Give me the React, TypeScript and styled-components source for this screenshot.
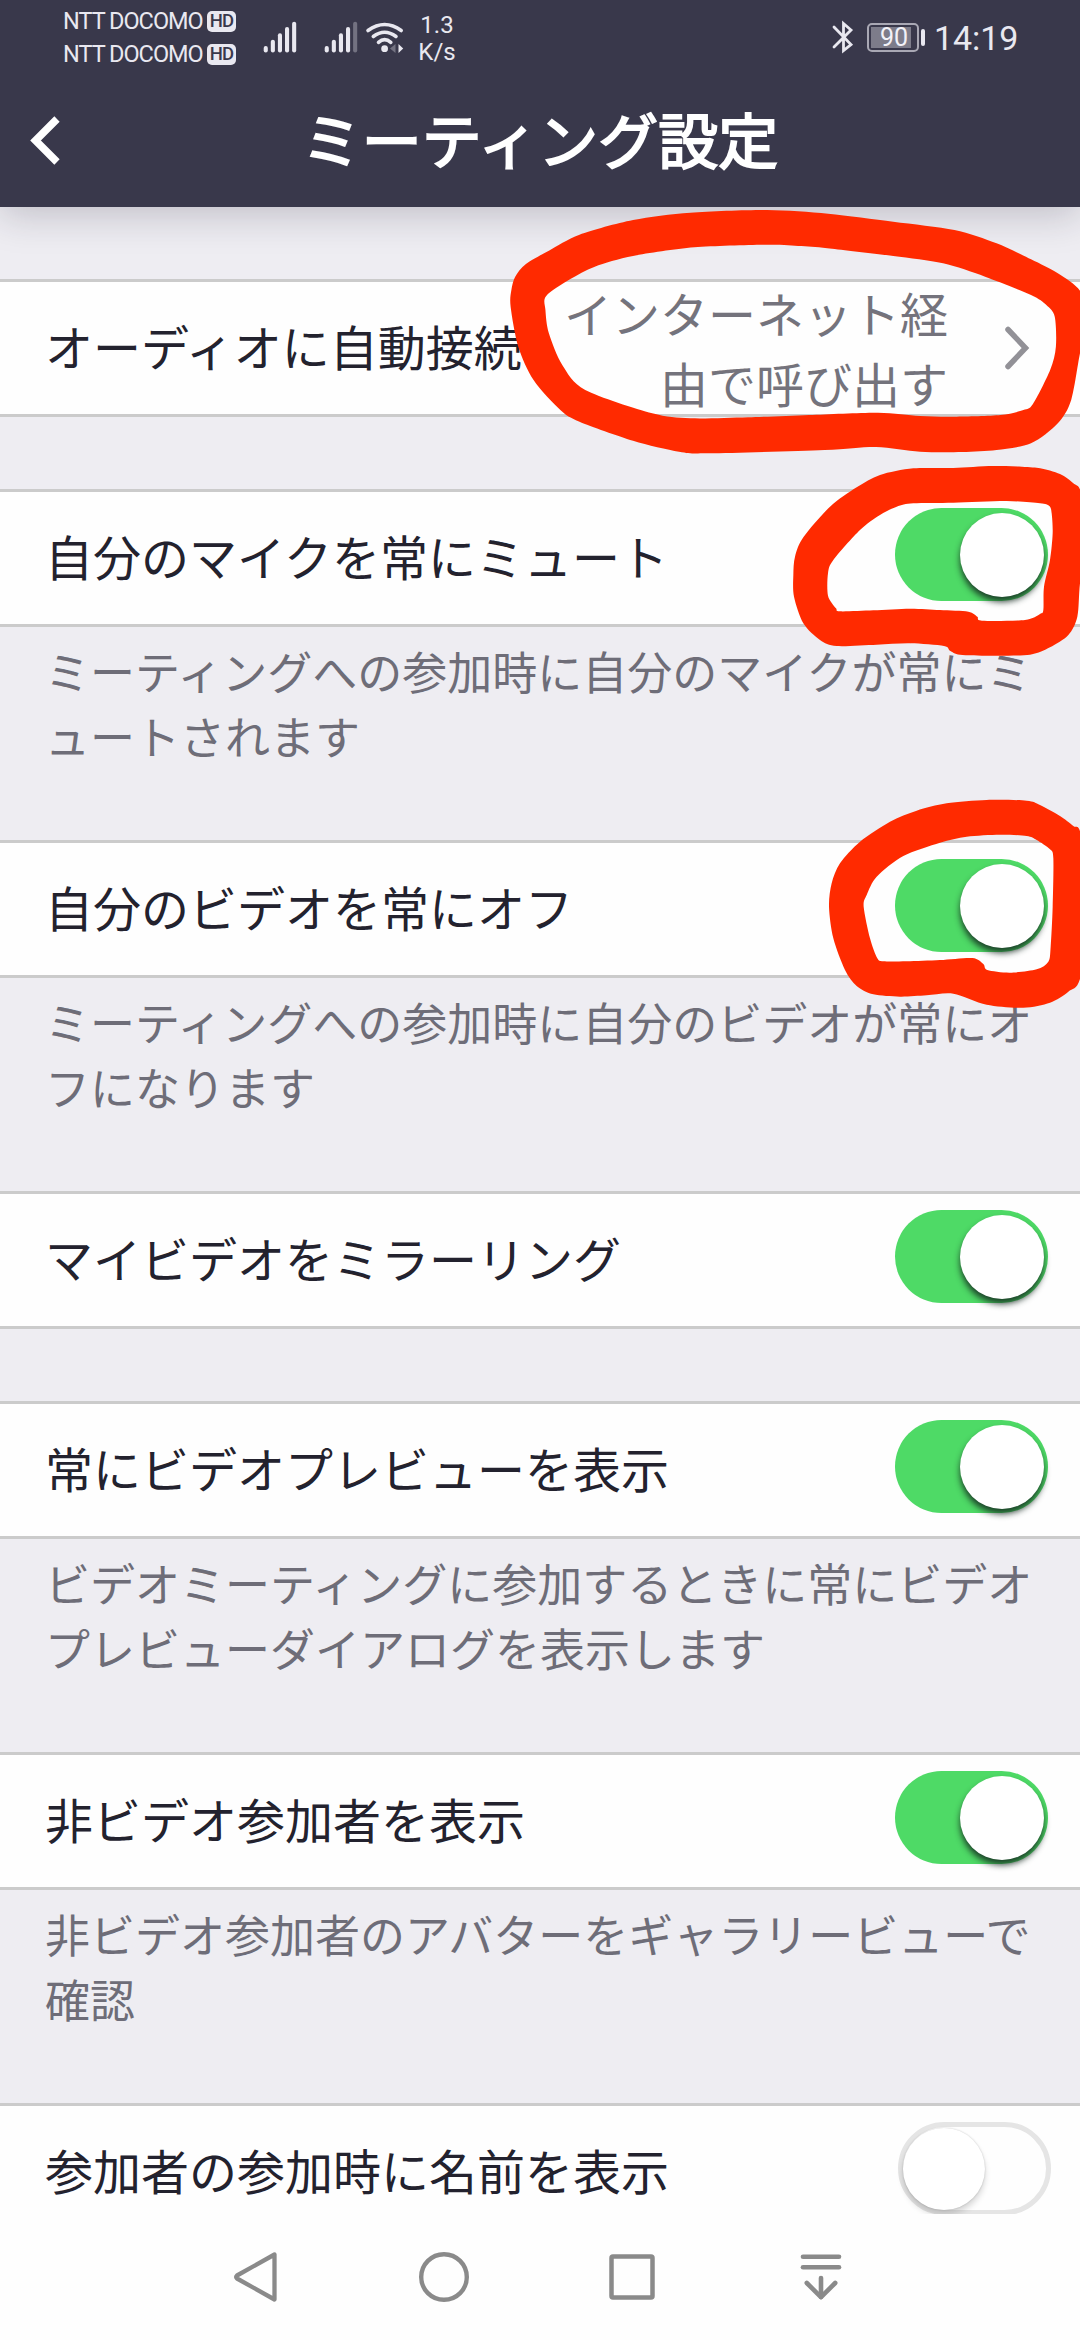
import React from "react";
import styled, { createGlobalStyle, css } from "styled-components";

const GlobalStyle = createGlobalStyle`
  * { box-sizing: border-box; }
  body { margin: 0; background: #eeedf2; }
`;

const jp = `"Noto Sans CJK JP", "Noto Sans", sans-serif`;
const latin = `Roboto, "Liberation Sans", sans-serif`;

const Screen = styled.div`
  position: relative;
  width: 1080px;
  height: 2340px;
  display: flex;
  flex-direction: column;
  overflow: hidden;
  background: #eeedf2;
  font-family: ${jp};
`;

const Header = styled.header`
  position: relative;
  flex: none;
  height: 207px;
  background: #39384b;
  box-shadow: 0 8px 36px rgba(30, 28, 50, 0.22);
`;

const StatusBar = styled.div`
  display: flex;
  align-items: flex-start;
  height: 72px;
  padding: 0 63px;
  color: #e9e8f0;
  font-family: ${latin};
`;

const Carriers = styled.div`
  display: flex;
  flex-direction: column;
  flex: none;
  gap: 9px;
  width: 197px;
  padding-top: 9px;
`;

const Carrier = styled.div`
  display: flex;
  align-items: center;
  height: 24px;
  gap: 6px;
`;

const CarrierName = styled.span`
  flex: none;
  width: 138px;
  font-size: 23.5px;
  line-height: 24px;
  letter-spacing: -1px;
  white-space: nowrap;
`;

const HdBadge = styled.span`
  display: flex;
  flex: none;
  align-items: center;
  justify-content: center;
  width: 29px;
  height: 21px;
  border-radius: 5px;
  background: #e9e8f0;
  color: #39384b;
  font-size: 18.5px;
  font-weight: 500;
  line-height: 21px;
  letter-spacing: -0.8px;
`;

const Glyph = styled.svg`
  display: block;
  flex: none;
  overflow: visible;
`;

const Speed = styled.div`
  display: flex;
  flex-direction: column;
  flex: none;
  align-items: center;
  width: 36px;
  margin-left: 11px;
  padding-top: 12px;
  font-size: 24px;
  line-height: 27px;
`;

const StatusRight = styled.div`
  display: flex;
  align-items: flex-start;
  margin-left: auto;
`;

const Battery = styled.div`
  display: flex;
  align-items: center;
  gap: 2px;
  margin: 23px 0 0 14px;
`;

const BatteryBody = styled.div`
  display: flex;
  width: 52px;
  height: 29px;
  padding: 2px;
  border: 2px solid #a9a8b4;
  border-radius: 5px;
`;

const BatteryLevel = styled.div`
  display: flex;
  align-items: center;
  justify-content: flex-end;
  width: 40px;
  height: 21px;
  padding-right: 3px;
  background: #7d7c8a;
  color: #f2f1f7;
  font-size: 25px;
  line-height: 21px;
`;

const BatteryNub = styled.div`
  width: 4px;
  height: 17px;
  border-radius: 2px;
  background: #e9e8f0;
`;

const Clock = styled.span`
  width: 83px;
  margin: 18px 0 0 9px;
  font-size: 34px;
  line-height: 40px;
  letter-spacing: -0.1px;
  white-space: nowrap;
`;

const TitleBar = styled.div`
  display: grid;
  grid-template-columns: 90px 1fr 90px;
  align-items: center;
  height: 135px;
`;

const BackButton = styled.button`
  display: flex;
  align-items: center;
  height: 135px;
  padding: 0 0 0 30px;
  border: 0;
  background: none;
`;

const Title = styled.h1`
  margin: 0;
  padding-bottom: 5px;
  color: #fff;
  font-size: 60px;
  font-weight: 400;
  line-height: 87px;
  text-align: center;
  -webkit-text-stroke: 2px #fff;
`;

const List = styled.main`
  flex: 1;
  min-height: 0;
  padding-top: 72px;
  overflow: hidden;
`;

const Section = styled.section`
  display: flex;
  flex-direction: column;
`;

const Row = styled.div`
  display: flex;
  align-items: center;
  justify-content: space-between;
  height: 138px;
  padding: 0 32px 0 45px;
  border: solid #cbcbcb;
  border-width: 3px 0;
  background: #fefefe;
`;

const Label = styled.span`
  padding-bottom: 6px;
  color: #23222e;
  font-size: 48px;
  line-height: 70px;
  white-space: nowrap;
`;

const Value = styled.div`
  display: flex;
  align-items: center;
  gap: 57px;
  padding-right: 19px;
`;

const ValueText = styled.span`
  padding-bottom: 1px;
  color: #74737c;
  font-size: 48px;
  line-height: 69.5px;
  text-align: right;
  white-space: nowrap;
`;

const Note = styled.p`
  height: 213px;
  margin: 0;
  padding: 11px 0 0 45px;
  color: #6e6d78;
  font-size: 45px;
  line-height: 65px;
  white-space: nowrap;
`;

const Gap = styled.div`
  height: 72px;
`;

const Track = styled.div<{ $on: boolean }>`
  display: flex;
  align-items: center;
  width: 153px;
  height: 93px;
  margin-bottom: 7px;
  border-radius: 47px;
  ${({ $on }) =>
    $on
      ? css`
          justify-content: flex-end;
          padding-right: 4px;
          background: #4eda66;
        `
      : css`
          justify-content: flex-start;
          margin-right: -3px;
          border: 5px solid #e5e5e5;
          background: #fefefe;
        `}
`;

const Knob = styled.div<{ $on: boolean }>`
  width: ${({ $on }) => ($on ? 84 : 82)}px;
  height: ${({ $on }) => ($on ? 84 : 82)}px;
  border-radius: 50%;
  background: #fff;
  box-shadow: ${({ $on }) =>
    $on
      ? "0 5px 6px rgba(20, 40, 30, 0.85)"
      : "0 5px 6px rgba(0, 0, 0, 0.16), 0 0 2px rgba(0, 0, 0, 0.2)"};
`;

const NavBar = styled.nav`
  position: relative;
  display: flex;
  flex: none;
  height: 126px;
  padding-left: 161px;
  background: #fefefe;
`;

const NavButton = styled.button`
  display: flex;
  align-items: center;
  justify-content: center;
  width: 188.5px;
  height: 126px;
  padding: 0;
  border: 0;
  background: none;
`;

const Mark = styled.svg<{ $x: number; $y: number; $w: number; $h: number }>`
  position: absolute;
  left: ${({ $x }) => $x}px;
  top: ${({ $y }) => $y}px;
  width: ${({ $w }) => $w}px;
  height: ${({ $h }) => $h}px;
  overflow: hidden;
  pointer-events: none;
`;

type Pt = [number, number];

/* Closed smooth curve through the points (Catmull-Rom converted to Béziers). */
function loop(pts: Pt[]): string {
  const n = pts.length;
  let d = `M${pts[0][0]} ${pts[0][1]}`;
  for (let i = 0; i < n; i++) {
    const a = pts[(i - 1 + n) % n];
    const b = pts[i];
    const c = pts[(i + 1) % n];
    const e = pts[(i + 2) % n];
    d += `C${b[0] + (c[0] - a[0]) / 7} ${b[1] + (c[1] - a[1]) / 7} ${c[0] - (e[0] - b[0]) / 7} ${
      c[1] - (e[1] - b[1]) / 7
    } ${c[0]} ${c[1]}`;
  }
  return d + "Z";
}

const marks: { x: number; y: number; w: number; h: number; box: string; outer: Pt[]; inner: Pt[] }[] = [
  {
    x: 480, y: 200, w: 600, h: 260, box: "0 0 1568 780",
    outer: [[80,320],[82,270],[92,230],[120,192],[180,152],[260,104],[400,60],[550,38],[750,30],[910,41],[1080,65],[1240,90],[1350,130],[1440,178],[1510,220],[1568,272],[1590,350],[1568,460],[1545,600],[1510,670],[1440,730],[1350,750],[1260,756],[1150,755],[1035,741],[900,750],[600,760],[520,755],[400,722],[260,665],[210,630],[140,540],[100,440]],
    inner: [[171,330],[173,288],[235,238],[300,200],[400,168],[560,142],[750,134],[840,138],[920,146],[1080,168],[1210,190],[1320,230],[1440,285],[1480,315],[1502,350],[1505,440],[1490,510],[1445,612],[1420,630],[1360,645],[1240,650],[1150,648],[1040,638],[860,645],[700,652],[550,655],[450,640],[275,570],[215,495],[180,400]],
  },
  {
    x: 740, y: 450, w: 340, h: 280, box: "0 0 1020 840",
    outer: [[160,375],[165,320],[190,262],[270,170],[350,112],[420,75],[520,55],[640,54],[760,48],[890,53],[960,72],[1000,100],[1022,125],[1040,250],[1020,400],[1012,500],[985,555],[930,592],[870,614],[750,617],[660,614],[630,602],[612,588],[510,580],[410,584],[290,588],[240,570],[190,520],[162,440]],
    inner: [[264,437],[264,370],[280,330],[360,240],[420,195],[470,170],[520,160],[640,158],[800,153],[900,160],[928,168],[935,190],[938,250],[930,330],[912,410],[910,480],[900,492],[855,510],[726,512],[712,500],[685,485],[600,480],[510,476],[400,481],[300,484],[288,475]],
  },
  {
    x: 740, y: 780, w: 340, h: 280, box: "0 0 1020 840",
    outer: [[267,380],[275,310],[300,250],[360,185],[450,125],[530,92],[620,70],[740,60],[860,62],[900,75],[960,108],[1000,138],[1022,160],[1060,350],[1022,590],[985,635],[930,668],[850,683],[740,674],[640,641],[560,646],[480,650],[400,643],[350,618],[315,570],[280,475]],
    inner: [[371,380],[380,345],[410,290],[490,228],[600,188],[680,170],[780,164],[860,168],[890,180],[930,208],[940,235],[938,380],[932,500],[925,545],[890,568],[810,578],[742,570],[730,552],[697,534],[600,540],[500,544],[430,544],[412,535],[390,475]],
  },
];

const barTops = [46, 39.7, 33.3, 27, 21.7];

function Signal({ weak }: { weak?: boolean }) {
  return (
    <Glyph width="36" height="72" viewBox="0 0 36 72">
      {barTops.map((top, i) => (
        <rect
          key={top}
          x={3.7 + i * 7.1}
          y={top}
          width="4.1"
          height={52.5 - top}
          rx="2"
          fill={weak && i === 4 ? "#737281" : "#e9e8f0"}
        />
      ))}
    </Glyph>
  );
}

const Spacer = styled.div`
  flex: none;
  width: 25px;
`;

function Wifi() {
  return (
    <Glyph width="51" height="72" viewBox="357 0 51 72">
      <g fill="none" stroke="#e9e8f0" strokeWidth="3.6" strokeLinecap="round">
        <path d="M368 30.5Q384.6 18.5 401.2 30.5" />
        <path d="M373.3 36.5Q384.6 28 396 36.5" />
        <path d="M378.5 42.3Q384.6 37 390.8 42.3" />
      </g>
      <circle cx="384.6" cy="48.7" r="3.4" fill="#e9e8f0" />
      <path d="M390 48.5L395.5 44V53Z" fill="#737281" />
      <path d="M398.5 44L403.2 48.5L398.5 53Z" fill="#e9e8f0" />
    </Glyph>
  );
}

function Switch({ on }: { on: boolean }) {
  return (
    <Track $on={on} role="switch" aria-checked={on}>
      <Knob $on={on} />
    </Track>
  );
}

const settings: { label: string; on: boolean; note?: [string, string] }[] = [
  {
    label: "自分のマイクを常にミュート",
    on: true,
    note: ["ミーティングへの参加時に自分のマイクが常にミ", "ュートされます"],
  },
  {
    label: "自分のビデオを常にオフ",
    on: true,
    note: ["ミーティングへの参加時に自分のビデオが常にオ", "フになります"],
  },
  { label: "マイビデオをミラーリング", on: true },
  {
    label: "常にビデオプレビューを表示",
    on: true,
    note: ["ビデオミーティングに参加するときに常にビデオ", "プレビューダイアログを表示します"],
  },
  {
    label: "非ビデオ参加者を表示",
    on: true,
    note: ["非ビデオ参加者のアバターをギャラリービューで", "確認"],
  },
  { label: "参加者の参加時に名前を表示", on: false },
];

export default function App() {
  return (
    <Screen lang="ja">
      <GlobalStyle />
      <Header>
        <StatusBar>
          <Carriers>
            {[0, 1].map((sim) => (
              <Carrier key={sim}>
                <CarrierName>NTT DOCOMO</CarrierName>
                <HdBadge>HD</HdBadge>
              </Carrier>
            ))}
          </Carriers>
          <Signal />
          <Spacer />
          <Signal weak />
          <Wifi />
          <Speed>
            <span>1.3</span>
            <span>K/s</span>
          </Speed>
          <StatusRight>
            <Glyph width="22" height="72" viewBox="831 0 22 72">
              <path
                d="M834 27L851 44.5L843.5 50.5V23.5L851 30L834 47"
                fill="none"
                stroke="#e9e8f0"
                strokeWidth="2.8"
                strokeLinecap="round"
              />
            </Glyph>
            <Battery>
              <BatteryBody>
                <BatteryLevel>90</BatteryLevel>
              </BatteryBody>
              <BatteryNub />
            </Battery>
            <Clock>14:19</Clock>
          </StatusRight>
        </StatusBar>
        <TitleBar>
          <BackButton aria-label="戻る">
            <Glyph width="30" height="48" viewBox="0 0 30 48">
              <path d="M27 3L5.5 24.5L27 46" fill="none" stroke="#fff" strokeWidth="7.5" />
            </Glyph>
          </BackButton>
          <Title>ミーティング設定</Title>
        </TitleBar>
      </Header>

      <List>
        <Section>
          <Row>
            <Label>オーディオに自動接続</Label>
            <Value>
              <ValueText>
                インターネット経
                <br />
                由で呼び出す
              </ValueText>
              <Glyph width="24" height="44" viewBox="0 0 24 44">
                <path
                  d="M3 3.5L20.5 22L3 40.5"
                  fill="none"
                  stroke="#929197"
                  strokeWidth="5.5"
                  strokeLinecap="round"
                />
              </Glyph>
            </Value>
          </Row>
          <Gap />
        </Section>
        {settings.map((item) => (
          <Section key={item.label}>
            <Row>
              <Label>{item.label}</Label>
              <Switch on={item.on} />
            </Row>
            {item.note ? (
              <Note>
                {item.note[0]}
                <br />
                {item.note[1]}
              </Note>
            ) : (
              <Gap />
            )}
          </Section>
        ))}
      </List>

      <NavBar>
        <NavButton aria-label="戻る">
          <Glyph width="43" height="50" viewBox="0 0 43 50">
            <path
              d="M40.5 2.5V47.5L3 26.5Q1.5 25 3 23.5Z"
              fill="none"
              stroke="#8a8a8a"
              strokeWidth="4.3"
              strokeLinejoin="round"
            />
          </Glyph>
        </NavButton>
        <NavButton aria-label="ホーム">
          <Glyph width="50" height="50" viewBox="0 0 50 50">
            <circle cx="25" cy="25" r="22.8" fill="none" stroke="#8a8a8a" strokeWidth="4.4" />
          </Glyph>
        </NavButton>
        <NavButton aria-label="履歴">
          <Glyph width="46" height="46" viewBox="0 0 46 46">
            <rect
              x="2.5"
              y="2.5"
              width="41"
              height="41"
              rx="1.5"
              fill="none"
              stroke="#8a8a8a"
              strokeWidth="4.5"
            />
          </Glyph>
        </NavButton>
        <NavButton aria-label="通知">
          <Glyph width="42" height="46" viewBox="0 0 42 46">
            <g fill="none" stroke="#8a8a8a" strokeWidth="4.6" strokeLinecap="round">
              <path d="M3 2.8H39" />
              <path d="M3 13.3H39" />
              <path d="M21 24V43" />
              <path d="M6.8 29L21 43.2L35.2 29" strokeLinejoin="round" />
            </g>
          </Glyph>
        </NavButton>
      </NavBar>

      {marks.map((m) => (
        <Mark
          key={m.y}
          $x={m.x}
          $y={m.y}
          $w={m.w}
          $h={m.h}
          viewBox={m.box}
          preserveAspectRatio="none"
          aria-hidden="true"
        >
          <path d={loop(m.outer) + loop(m.inner)} fill="#ff2a00" fillRule="evenodd" />
        </Mark>
      ))}
    </Screen>
  );
}
